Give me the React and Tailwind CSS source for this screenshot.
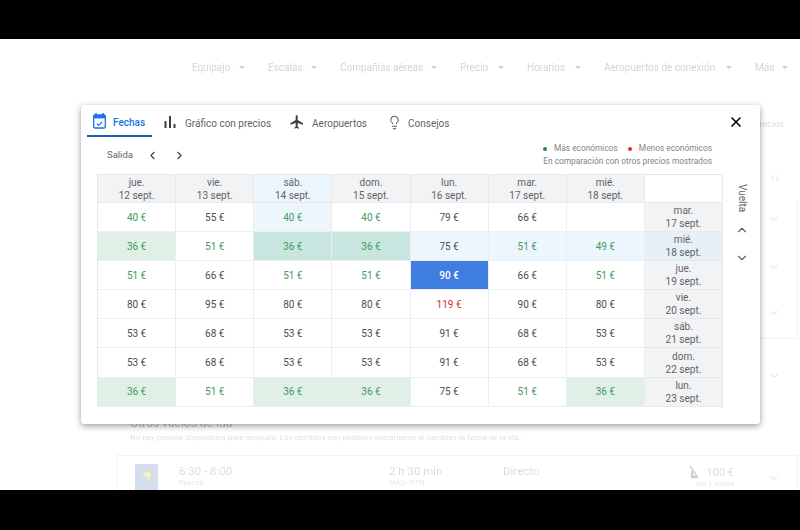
import React from "react";
import { ChevronDown, ChevronLeft, ChevronRight, ChevronUp, Lightbulb, X } from "lucide-react";

const outbound = [
  ["jue.", "12 sept."],
  ["vie.", "13 sept."],
  ["sáb.", "14 sept."],
  ["dom.", "15 sept."],
  ["lun.", "16 sept."],
  ["mar.", "17 sept."],
  ["mié.", "18 sept."],
];

// g = cheap (green text), r = expensive (red text)
// bg: w white, b row/col highlight, g cheap cell, t cheap + highlighted, s selected
const rows = [
  { day: ["mar.", "17 sept."], cells: [["40 €", "g"], ["55 €"], ["40 €", "g", "b"], ["40 €", "g"], ["79 €"], ["66 €"], [""]] },
  { day: ["mié.", "18 sept."], active: true, cells: [["36 €", "g", "g"], ["51 €", "g"], ["36 €", "g", "t"], ["36 €", "g", "t"], ["75 €", "", "b"], ["51 €", "g", "b"], ["49 €", "g", "b"]] },
  { day: ["jue.", "19 sept."], cells: [["51 €", "g"], ["66 €"], ["51 €", "g"], ["51 €", "g"], ["90 €", "", "s"], ["66 €"], ["51 €", "g"]] },
  { day: ["vie.", "20 sept."], cells: [["80 €"], ["95 €"], ["80 €"], ["80 €"], ["119 €", "r"], ["90 €"], ["80 €"]] },
  { day: ["sáb.", "21 sept."], cells: [["53 €"], ["68 €"], ["53 €"], ["53 €"], ["91 €"], ["68 €"], ["53 €"]] },
  { day: ["dom.", "22 sept."], cells: [["53 €"], ["68 €"], ["53 €"], ["53 €"], ["91 €"], ["68 €"], ["53 €"]] },
  { day: ["lun.", "23 sept."], cells: [["36 €", "g", "g"], ["51 €", "g"], ["36 €", "g", "g"], ["36 €", "g", "g"], ["75 €"], ["51 €", "g"], ["36 €", "g", "g"]] },
];

const filters = [
  ["Equipajo", "w-[53px]"],
  ["Escalas", "w-[49px]"],
  ["Compañías aéreas", "w-[97px]"],
  ["Precio", "w-[44px]"],
  ["Horarios", "w-[54px]"],
  ["Aeropuertos de conexión", "w-[128px]"],
  ["Más", "w-[33px]"],
];

const Caret = () => <span className="border-x-[3px] border-t-[3px] border-x-transparent border-t-[#cfcfcf]" />;

const DayCell = ({ day, className }) => (
  <div className={`flex flex-col items-center justify-center border-r border-b border-[#e6e8ea] text-[10px] leading-[13px] text-[#5f6368] ${className}`}>
    <span>{day[0]}</span>
    <span>{day[1]}</span>
  </div>
);

const PriceCell = ({ cell }) => {
  const [price, tone, bg] = cell;
  let color = "text-[#4a4e52]";
  if (tone === "g") color = "text-[#3f9a5c]";
  if (tone === "r") color = "text-[#d93025]";
  let fill = "bg-white";
  if (bg === "b") fill = "bg-[#eef6fd]";
  if (bg === "g") fill = "bg-[#e0f0e6]";
  if (bg === "t") fill = "bg-[#c9e5df]";
  if (bg === "s") {
    fill = "bg-[#3f7de0]";
    color = "text-white font-medium";
  }
  return (
    <div className={`flex items-center justify-center border-r border-b border-[#eceef0] text-[10px] ${fill} ${color}`}>
      {price}
    </div>
  );
};

const Background = () => (
  <div className="flex h-full flex-col text-[#d4d4d4] blur-[0.5px]">
    <div className="flex h-[56px] items-center pt-[1px] pl-[192px] text-[10px]">
      {filters.map(([label, width], i) => (
        <div key={i} className={`mr-[23px] flex shrink-0 items-center justify-between ${width}`}>
          <span className="whitespace-nowrap">{label}</span>
          <Caret />
        </div>
      ))}
    </div>
    <div className="flex justify-end pt-[23px] pr-[16px] text-[9px] leading-[12px] text-[#dcdcdc]">
      <span>Precios</span>
    </div>
    <div className="flex flex-1 flex-col items-end">
      <span className="mt-[43px] mr-[20px] text-[10px] leading-[10px]">↑↓</span>
      <div className="mt-[17px] mr-[2px] flex w-[40px] flex-col items-end border-r border-b border-[#f4f4f4] pt-[13px] pr-[17px] pb-[19px]">
        <ChevronDown size={12} />
        <ChevronDown size={12} className="mt-[36px]" />
        <ChevronDown size={12} className="mt-[34px]" />
      </div>
      <ChevronDown size={12} className="mt-[31px] mr-[20px]" />
    </div>
    <div className="pl-[130px] text-[#c4c4c4]">
      <p className="text-[12px] leading-[14px]">Otros vuelos de ida</p>
      <p className="mt-[2px] text-[8px] leading-[11px] text-[#e2e2e2]">
        No hay precios disponibles para después. Los cambios son posibles únicamente si cambias la fecha de la ida.
      </p>
    </div>
    <div className="mt-[12px] mr-[2px] ml-[116px] flex h-[35px] items-start border-t border-r border-l border-[#f3f3f3] pt-[8px] pl-[18px] text-[#dcdcdc]">
      <div className="flex h-[26px] w-[23px] shrink-0 items-center justify-center bg-[#d5deee]">
        <svg width="13" height="15" viewBox="0 0 13 15" fill="none">
          <path d="M1 4L6 1l6 2-3 10-2-5z" fill="#eef0d8" stroke="#dfe5a8" strokeWidth="1" />
        </svg>
      </div>
      <div className="mt-[1px] ml-[21px] w-[210px] shrink-0">
        <p className="text-[11.5px] leading-[13px]">6:30 - 8:00</p>
        <p className="text-[7.5px] leading-[10px] text-[#e8e8e8]">Ryanair</p>
      </div>
      <div className="mt-[1px] w-[114px] shrink-0">
        <p className="text-[11.5px] leading-[13px]">2 h 30 min</p>
        <p className="text-[7.5px] leading-[10px] text-[#e8e8e8]">MAD–STN</p>
      </div>
      <p className="mt-[1px] w-[185px] shrink-0 text-[11.5px] leading-[13px]">Directo</p>
      <div className="mt-[1px] w-[46px] shrink-0 text-right">
        <div className="flex items-center justify-between">
          <svg width="12" height="14" viewBox="0 0 12 14" fill="none" stroke="#d0d0d0" strokeWidth="1.4">
            <path d="M2 1l8 12" />
            <path d="M4 6v6h5" strokeWidth="2.4" />
          </svg>
          <p className="text-[11px] leading-[13px]">100 €</p>
        </div>
        <p className="whitespace-nowrap text-[7.5px] leading-[10px] text-[#e8e8e8]">ida y vuelta</p>
      </div>
      <ChevronDown size={12} className="mt-[8px] ml-[34px]" />
    </div>
  </div>
);

const Tabs = () => (
  <div className="flex h-[32px] items-stretch justify-between pr-[16px] pl-[6px] text-[10px] text-[#5f6368]">
    <div className="flex items-stretch">
      <div className="flex w-[65px] items-center gap-[7px] border-b-2 border-[#1a5fb4] pt-[2px] pl-[6px] font-medium text-[#1a73e8]">
        <svg width="13" height="16" viewBox="0 0 13 16" fill="none" className="shrink-0">
          <path d="M3 0v2M10 0v2" stroke="#1a73e8" strokeWidth="1.5" />
          <rect x="0.7" y="2" width="11.6" height="13" rx="1.2" stroke="#1a73e8" strokeWidth="1.3" />
          <rect x="0.7" y="2" width="11.6" height="3.4" fill="#1a73e8" />
          <path d="M4 10.5l1.8 1.8L9.2 8.6" stroke="#1a73e8" strokeWidth="1.2" />
        </svg>
        <span className="mt-[2px]">Fechas</span>
      </div>
      <div className="ml-[12px] flex items-center gap-[9px] pt-[2px]">
        <svg width="12" height="12" viewBox="0 0 12 12" fill="#3c4043" className="shrink-0">
          <rect x="0.5" y="5" width="2" height="7" />
          <rect x="5" y="0" width="2" height="12" />
          <rect x="9.5" y="8" width="2" height="4" />
        </svg>
        <span className="mt-[2px]">Gráfico con precios</span>
      </div>
      <div className="ml-[18px] flex items-center gap-[7px] pt-[2px]">
        <svg width="16" height="16" viewBox="0 0 24 24" fill="#3c4043" className="shrink-0">
          <path d="M21 16v-2l-8-5V3.5C13 2.67 12.33 2 11.5 2S10 2.67 10 3.5V9l-8 5v2l8-2.5V19l-2 1.5V22l3.5-1 3.5 1v-1.5L13 19v-5.5l8 2.5z" />
        </svg>
        <span className="mt-[2px]">Aeropuertos</span>
      </div>
      <div className="ml-[20px] flex items-center gap-[6px] pt-[2px]">
        <Lightbulb size={15} strokeWidth={1.5} className="shrink-0 text-[#3c4043]" />
        <span className="mt-[2px]">Consejos</span>
      </div>
    </div>
    <button className="flex items-center pt-[2px]">
      <X size={16} strokeWidth={2.4} className="text-black" />
    </button>
  </div>
);

const Modal = () => (
  <div className="absolute top-[66px] left-[81px] flex h-[319px] w-[679px] flex-col rounded-[3px] bg-white shadow-[0_2px_6px_rgba(0,0,0,0.4)]">
    <Tabs />
    <div className="flex h-[37px] justify-between pr-[48px] pl-[26px]">
      <div className="flex h-[36px] items-center text-[9.5px] text-[#5f6368]">
        <span className="w-[39px]">Salida</span>
        <ChevronLeft size={13} className="text-[#3c4043]" />
        <ChevronRight size={13} className="ml-[14px] text-[#3c4043]" />
      </div>
      <div className="pt-[5px] text-right text-[8.35px] leading-[13px] text-[#80868b]">
        <div className="flex items-center justify-end">
          <span className="h-[4px] w-[4px] rounded-full bg-[#1e8e3e]" />
          <span className="ml-[7px]">Más económicos</span>
          <span className="ml-[10px] h-[4px] w-[4px] rounded-full bg-[#d93025]" />
          <span className="ml-[7px]">Menos económicos</span>
        </div>
        <p>En comparación con otros precios mostrados</p>
      </div>
    </div>
    <div className="flex">
      <div className="ml-[16px] grid w-[626px] grid-cols-8 grid-rows-[28px] auto-rows-[29.1px] border-t border-l border-[#e6e8ea]">
        {outbound.map((day, i) => (
          <DayCell key={i} day={day} className={i === 2 ? "bg-[#edf5fd]" : "bg-[#f1f3f4]"} />
        ))}
        <div className="border-r border-b border-[#e6e8ea] bg-white" />
        {rows.map((row, r) => (
          <React.Fragment key={r}>
            {row.cells.map((cell, c) => (
              <PriceCell key={c} cell={cell} />
            ))}
            <DayCell day={row.day} className={row.active ? "bg-[#e8f0f7]" : "bg-[#f1f3f4]"} />
          </React.Fragment>
        ))}
      </div>
      <div className="flex w-[37px] flex-col items-center text-[#5f6368]">
        <span className="mt-[10px] text-[10px] leading-[14px] [writing-mode:vertical-rl]">Vuelta</span>
        <ChevronUp size={14} className="mt-[11px] text-[#5f6368]" />
        <ChevronDown size={14} className="mt-[14px] text-[#5f6368]" />
      </div>
    </div>
  </div>
);

export default function App() {
  return (
    <div className="flex h-[530px] w-[800px] flex-col overflow-hidden bg-black font-['Roboto',sans-serif]">
      <div className="h-[39px] shrink-0 bg-black" />
      <div className="relative h-[451px] shrink-0 overflow-hidden bg-white">
        <Background />
        <Modal />
      </div>
      <div className="h-[40px] shrink-0 bg-black" />
    </div>
  );
}
